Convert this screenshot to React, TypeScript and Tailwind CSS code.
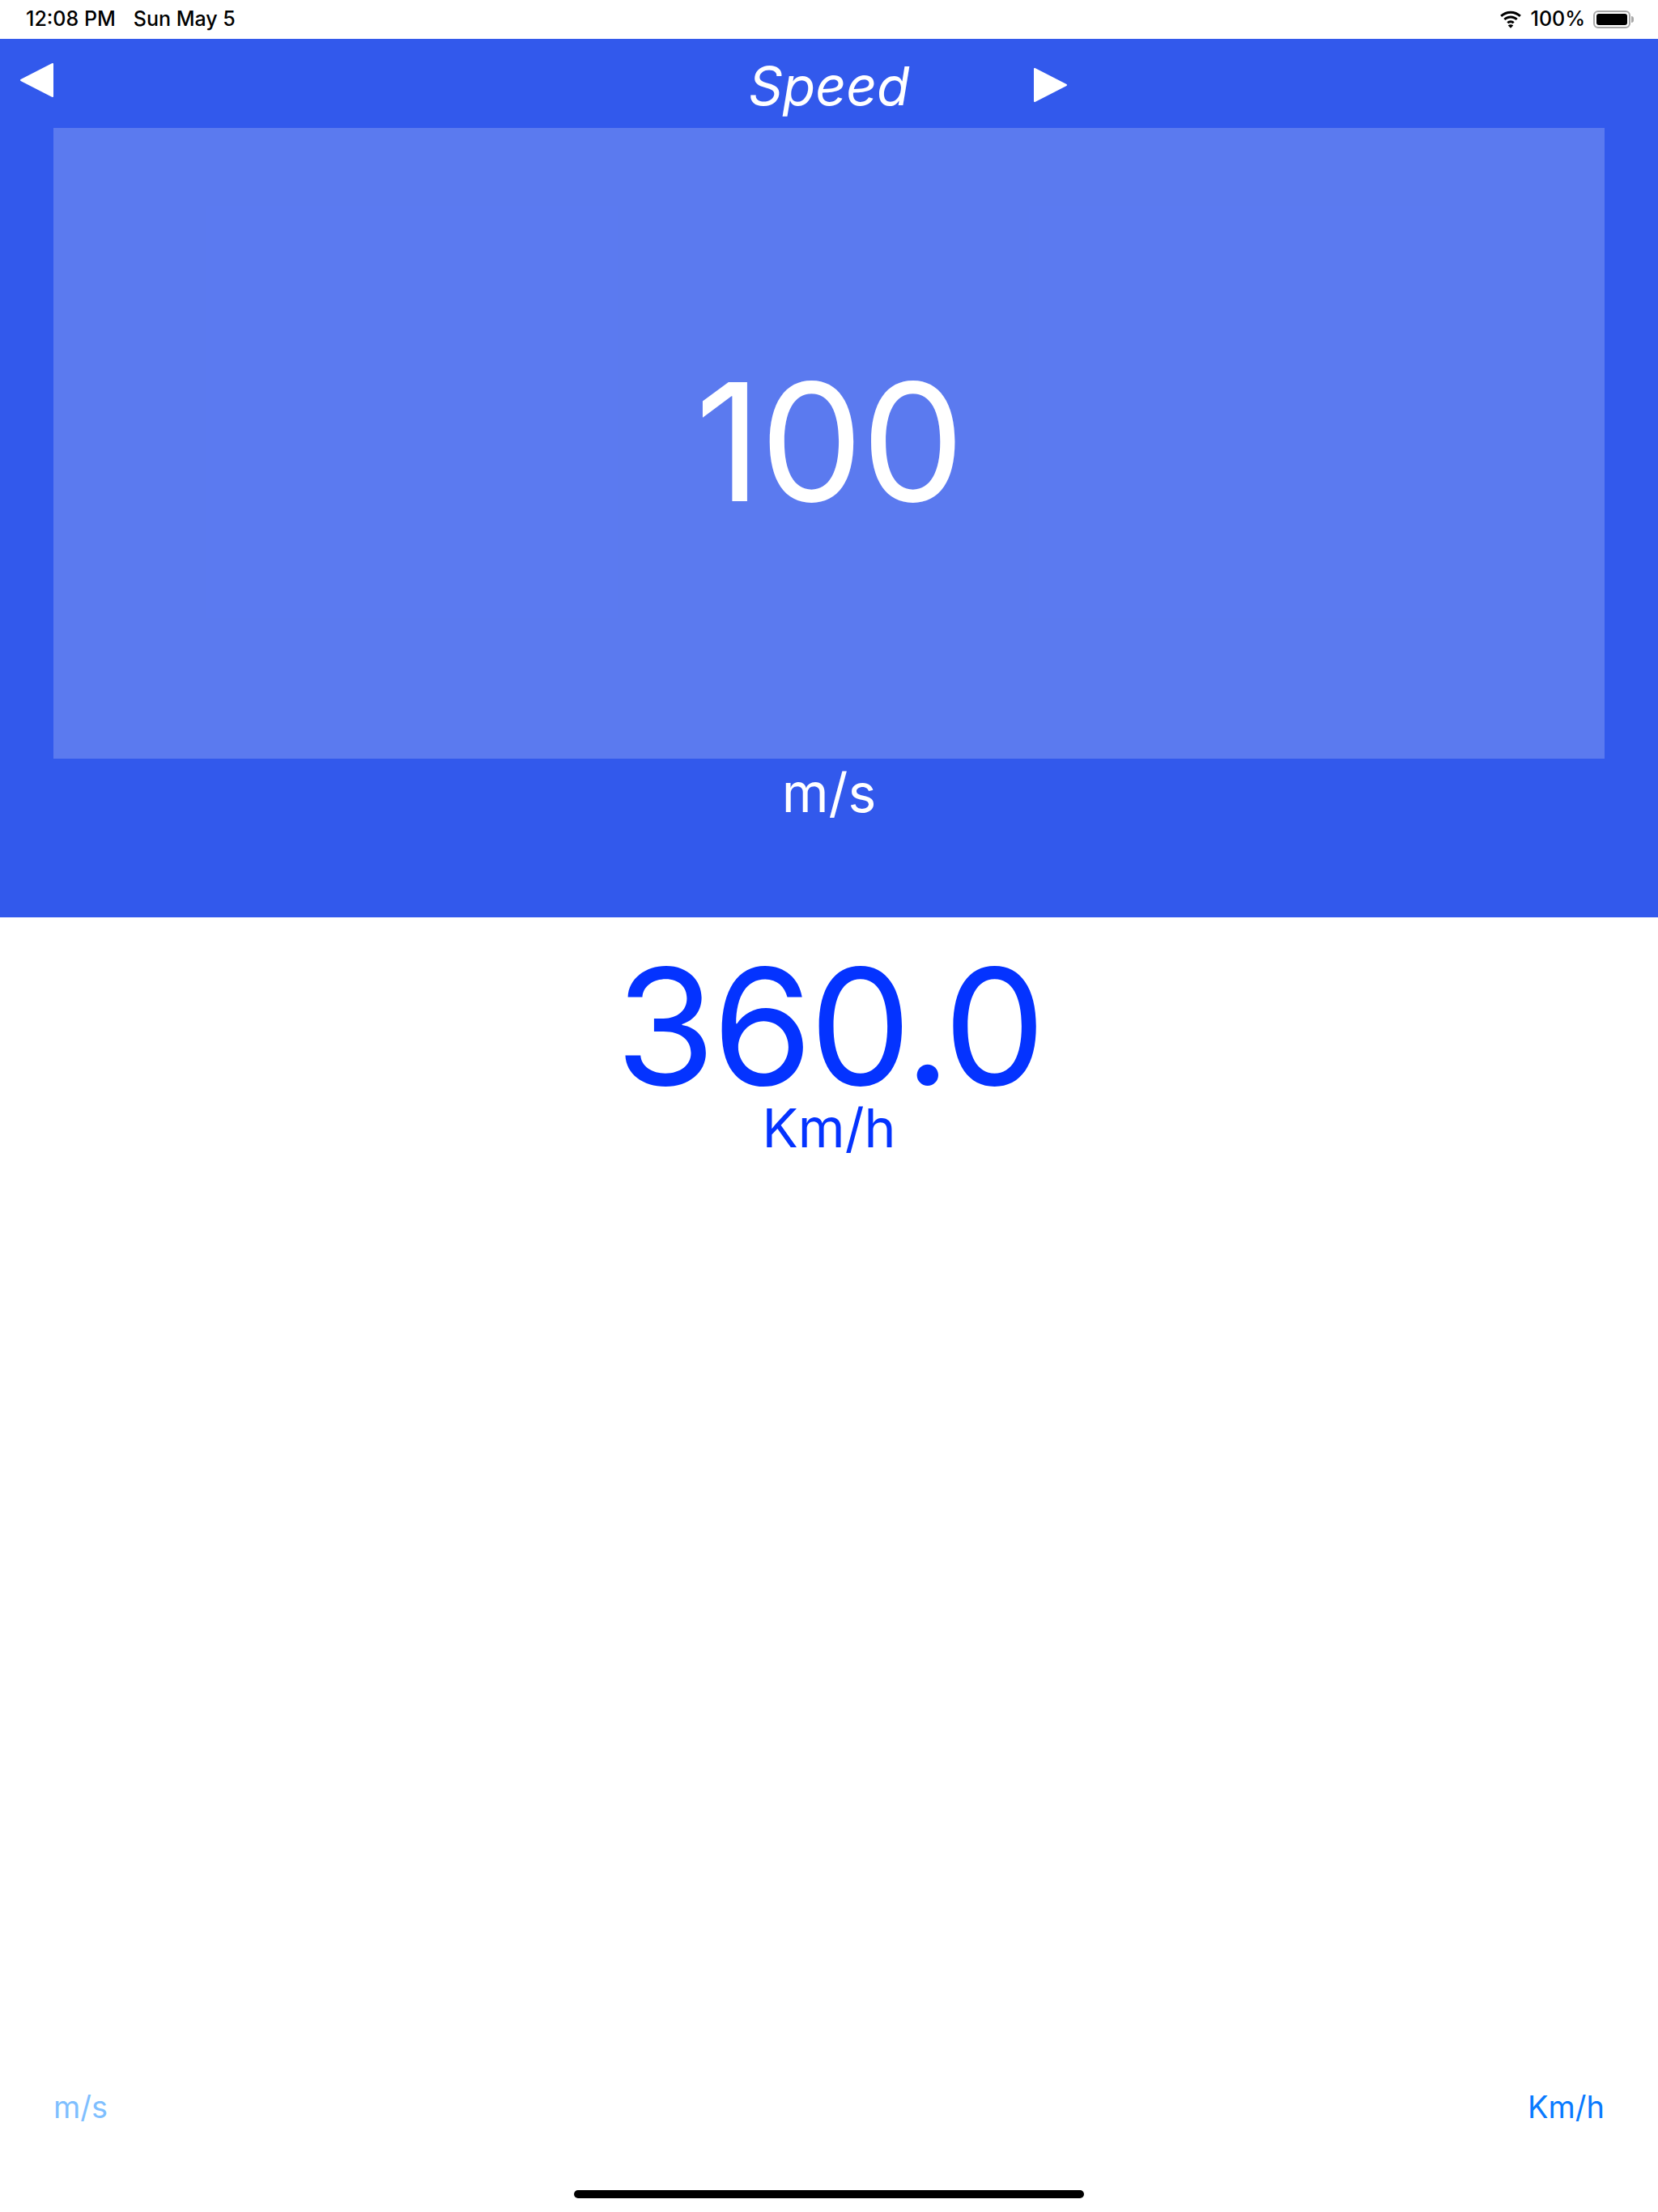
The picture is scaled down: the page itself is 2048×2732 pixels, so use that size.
import React from 'react';

const font = { fontFamily: 'Inter, "Liberation Sans", sans-serif' };

const Wifi = () => (
  <svg width="30" height="22" viewBox="0 0 28 20" fill="black">
    <path d="M14 3.2c3.9 0 7.4 1.5 10.1 4l1.9-2C22.8 2.2 18.6.4 14 .4S5.2 2.2 2 5.2l1.9 2c2.7-2.5 6.2-4 10.1-4z" />
    <path d="M14 8.6c2.4 0 4.5.9 6.2 2.4l1.9-2C20 7 17.1 5.8 14 5.8S8 7 5.9 9l1.9 2c1.7-1.5 3.8-2.4 6.2-2.4z" />
    <path d="M14 14c1 0 1.9.4 2.5 1L18.4 13c-1.1-1.1-2.7-1.8-4.4-1.8S10.7 11.9 9.6 13l1.9 2c.6-.6 1.5-1 2.5-1z" />
    <path d="M14 20l3-3.1c-.8-.7-1.8-1.1-3-1.1s-2.2.4-3 1.1z" />
  </svg>
);

const Battery = () => (
  <div className="flex items-center">
    <div className="w-[46px] h-[22px] rounded-[6px] border-2 border-[#a8a8a8] p-[2px]">
      <div className="w-full h-full rounded-[3px] bg-black" />
    </div>
    <div className="w-[3px] h-[8px] rounded-r-full bg-[#a8a8a8] ml-[1px]" />
  </div>
);

const StatusBar = () => (
  <div className="h-[48px] flex items-center justify-between pl-[32px] pr-[30px] text-[25px] font-medium text-black" style={font}>
    <div className="flex gap-[22px]">
      <span>12:08 PM</span>
      <span>Sun May 5</span>
    </div>
    <div className="flex items-center gap-[10px]">
      <Wifi />
      <span>100%</span>
      <Battery />
    </div>
  </div>
);

const Triangle = ({ dir }: { dir: 'left' | 'right' }) => (
  <svg width="41" height="42" viewBox="0 0 41 42" fill="white">
    {dir === 'left' ? (
      <path d="M40 1v40L1 21z" strokeLinejoin="round" stroke="white" strokeWidth="2" />
    ) : (
      <path d="M1 1v40l39-20z" strokeLinejoin="round" stroke="white" strokeWidth="2" />
    )}
  </svg>
);

export default function App() {
  return (
    <div className="w-[2048px] h-[2732px] bg-white flex flex-col" style={font}>
      <StatusBar />

      <section className="bg-[#3259ec] h-[1085px] flex flex-col">
        <div className="h-[110px] grid grid-cols-[1fr_auto_1fr] items-center">
          <div className="pl-[25px] -mt-[8px]">
            <Triangle dir="left" />
          </div>
          <h1 className="text-[66px] italic text-white leading-none mt-[6px]">Speed</h1>
          <div className="pl-[153px] mt-[4px]">
            <Triangle dir="right" />
          </div>
        </div>

        <div className="mx-[66px] h-[779px] bg-white/20 flex items-center justify-center">
          <span className="text-[202px] text-white leading-none tracking-[-2px] -mt-[4px]">100</span>
        </div>

        <div className="text-center text-white text-[66px] leading-none mt-[9px]">m/s</div>
      </section>

      <div className="flex flex-col items-center pt-[41px]">
        <span className="text-[200px] text-[#0433ff] leading-[0.93] tracking-[-4px]">360.0</span>
        <span className="text-[66px] text-[#0433ff] leading-none">Km/h</span>
      </div>

      <div className="flex-1" />

      <div className="flex justify-between items-end px-[66px] text-[38px] leading-none translate-y-[5px]">
        <span className="text-[#7fbfff]">m/s</span>
        <span className="text-[#0a7aff]">Km/h</span>
      </div>

      <div className="h-[116px] flex items-end justify-center pb-[17px]">
        <div className="w-[630px] h-[10px] rounded-full bg-black" />
      </div>
    </div>
  );
}
